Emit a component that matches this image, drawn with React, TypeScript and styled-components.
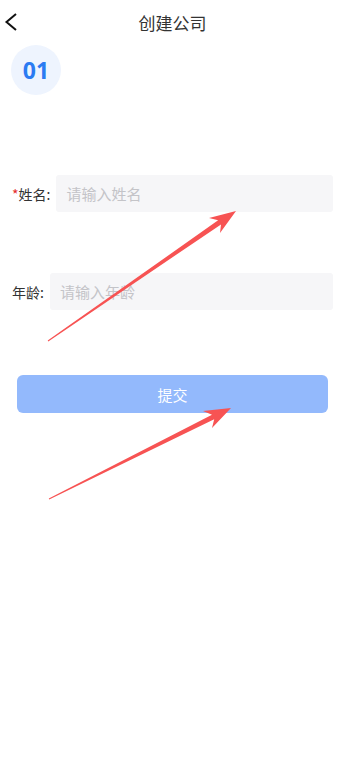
import styled, { createGlobalStyle } from "styled-components";

const GlobalStyle = createGlobalStyle`
  html, body {
    margin: 0;
    padding: 0;
    background: #fff;
  }
  body {
    font-family: "Noto Sans CJK SC", "Noto Sans", sans-serif;
    color: #333;
  }
  * {
    box-sizing: border-box;
  }
`;

const Page = styled.div`
  position: relative;
  width: 352px;
  min-height: 777px;
  background: #fff;
`;

const Header = styled.div`
  position: relative;
  height: 44px;
  padding-right: 7px;
  display: flex;
  align-items: center;
  justify-content: center;
`;

const BackButton = styled.button`
  position: absolute;
  left: 0;
  top: 6px;
  width: 32px;
  height: 32px;
  padding: 0;
  border: none;
  background: none;
  display: flex;
  align-items: center;
  justify-content: center;
`;

const Title = styled.div`
  font-size: 17px;
  color: #333;
`;

const StepBadge = styled.div`
  width: 50px;
  height: 50px;
  margin: 1px 0 0 11px;
  border-radius: 50%;
  background: #eef4fe;
  display: flex;
  align-items: center;
  justify-content: center;
  font-family: "Noto Sans", "Open Sans", sans-serif;
  font-size: 23px;
  font-weight: 700;
  color: #2b7bf2;
`;

const Form = styled.div`
  display: flex;
  flex-direction: column;
  gap: 61px;
  padding: 80px 19px 0 12px;
`;

const Row = styled.div`
  display: flex;
  align-items: center;
  gap: 6px;
`;

const Label = styled.label`
  font-size: 14px;
  color: #333;
  white-space: nowrap;
`;

const Star = styled.span`
  color: #e52b2b;
`;

const Input = styled.input`
  flex: 1;
  height: 37px;
  border: none;
  border-radius: 3px;
  background: #f6f6f8;
  padding: 0 10px;
  font-family: inherit;
  font-size: 15px;
  color: #333;
  outline: none;
  &::placeholder {
    color: #c4c4c8;
  }
`;

const SubmitButton = styled.button`
  display: block;
  width: 311px;
  height: 38px;
  margin: 65px 0 0 17px;
  border: none;
  border-radius: 6px;
  background: #93b9fc;
  color: #fff;
  font-family: inherit;
  font-size: 15px;
`;

const Overlay = styled.svg`
  position: absolute;
  left: 0;
  top: 0;
  pointer-events: none;
`;

export default function App() {
  return (
    <Page>
      <GlobalStyle />
      <Header>
        <BackButton>
          <svg width="32" height="32" viewBox="0 0 32 32">
            <polyline points="16,8 6.5,16 16,24" fill="none" stroke="#111" strokeWidth="2" />
          </svg>
        </BackButton>
        <Title>创建公司</Title>
      </Header>
      <StepBadge>01</StepBadge>
      <Form>
        <Row>
          <Label>
            <Star>*</Star>姓名:
          </Label>
          <Input placeholder="请输入姓名" />
        </Row>
        <Row>
          <Label>年龄:</Label>
          <Input placeholder="请输入年龄" />
        </Row>
      </Form>
      <SubmitButton>提交</SubmitButton>
      <Overlay width="352" height="777" viewBox="0 0 352 777">
        <polygon
          fill="#f75353"
          points="47.7,340.6 218.1,220.3 209,218 236,211 220,233 221,224.4 48.3,341.4"
        />
        <polygon
          fill="#f75353"
          points="48.8,498.6 212,414.7 203,411 231,408 212,428 214.2,419.2 49.2,499.4"
        />
      </Overlay>
    </Page>
  );
}
